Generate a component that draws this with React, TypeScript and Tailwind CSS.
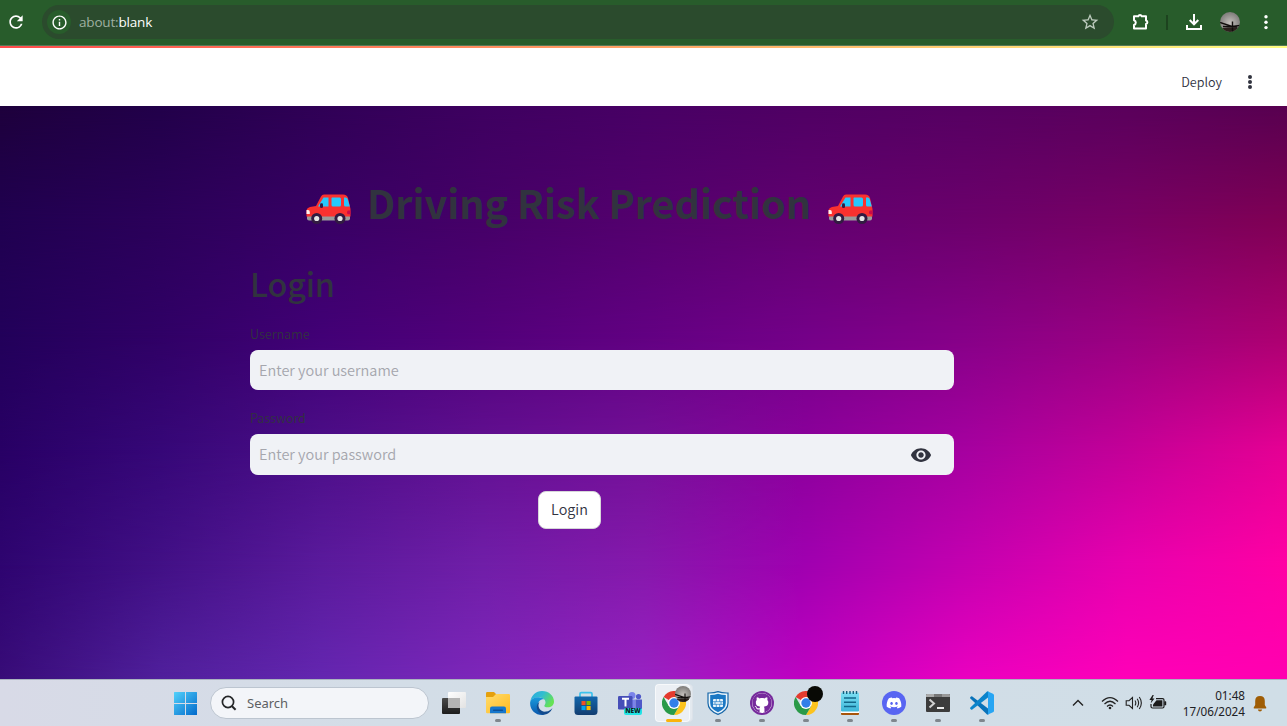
import React from "react";
import { MdRefresh, MdInfoOutline, MdStarBorder, MdVisibility } from "react-icons/md";
import { FaDiscord, FaGithub } from "react-icons/fa";

function Backdrop() {
  return (
    <div className="absolute inset-0">
      <div className="absolute inset-0 bg-[linear-gradient(to_right,#1e003c,#22004a,#300056,#3e0060,#480065,#500064,#560062,#5a005c,#580050)]" />
      <div className="absolute inset-0 bg-[linear-gradient(to_right,#200050,#2b005a,#380065,#460068,#54006e,#620070,#6c006c,#780064,#800054)] [mask-image:linear-gradient(to_bottom,transparent_0%,black_20%)]" />
      <div className="absolute inset-0 bg-[linear-gradient(to_right,#22005a,#300066,#420076,#52007a,#620082,#740088,#860088,#9a0080,#ac0070)] [mask-image:linear-gradient(to_bottom,transparent_20%,black_40%)]" />
      <div className="absolute inset-0 bg-[linear-gradient(to_right,#280065,#360778,#4c0e88,#621092,#741098,#8c009c,#a600a0,#c40098,#e60094)] [mask-image:linear-gradient(to_bottom,transparent_40%,black_60%)]" />
      <div className="absolute inset-0 bg-[linear-gradient(to_right,#2e0470,#421086,#5a1a9c,#701ea8,#8618ac,#a000b0,#c400b0,#e800ae,#ff00a4)] [mask-image:linear-gradient(to_bottom,transparent_60%,black_80%)]" />
      <div className="absolute inset-0 bg-[linear-gradient(to_right,#380c78,#50209c,#6426b0,#7e26ba,#9822c2,#c000c2,#ea00c0,#ff00b8,#ff00b0)] [mask-image:linear-gradient(to_bottom,transparent_80%,black_100%)]" />
    </div>
  );
}

function Avatar({ size }: { size: number }) {
  return (
    <svg width={size} height={size} viewBox="0 0 20 20">
      <defs>
        <radialGradient id="sky" cx=".5" cy=".55" r=".6">
          <stop offset="0" stopColor="#c4c0bc" />
          <stop offset="1" stopColor="#777573" />
        </radialGradient>
        <clipPath id="disc"><circle cx="10" cy="10" r="10" /></clipPath>
      </defs>
      <g clipPath="url(#disc)">
        <rect width="20" height="20" fill="url(#sky)" />
        <path d="M0 16.500 L8 15.500 L20 15.500 V20 H0Z" fill="#2c211d" />
        <path d="M0 10.500 L12 14.500 L20 13.500 M12.500 9.500 V20 M3 14.500 L17 15" stroke="#120e0d" strokeWidth="1.400" fill="none" />
      </g>
    </svg>
  );
}

function BrowserBar() {
  return (
    <div className="flex h-[45px] shrink-0 items-start bg-[#285c2b] pt-[5px] text-white">
      <div className="flex h-[34px] w-[42px] items-center pl-[6px]"><MdRefresh size={20} /></div>
      <div className="flex h-[34px] w-[1072px] items-center rounded-full bg-[#2b4b2d] pl-[5px] pr-[14px]">
        <div className="flex size-6 items-center justify-center rounded-full bg-[#285c2b]"><MdInfoOutline size={17} /></div>
        <span className="ml-2 grow font-['Open_Sans',sans-serif] text-[13.5px] font-normal leading-5 tracking-[-0.18px] text-white"><span className="text-[#9fb0a0]">about:</span>blank</span>
        <MdStarBorder size={20} className="text-[#bccabd]" />
      </div>
      <div className="flex h-[34px] grow items-center">
        <svg className="ml-4" width="20" height="20" viewBox="0 0 20 20" fill="none" stroke="#fff" strokeWidth="2" strokeLinejoin="round">
          <path d="M4 4.300H8.300A1.800 1.800 0 0 1 11.700 4.300H16V8.500A1.800 1.800 0 0 1 16 12V16.500H4V13A2.500 2.500 0 0 0 4 8.200Z" />
        </svg>
        <div className="ml-4 h-[15px] w-[2px] bg-[#1d431f]" />
        <svg className="ml-4" width="20" height="20" viewBox="0 0 20 20" fill="none" stroke="#fff" strokeWidth="2">
          <path d="M10 2V12M5.700 8L10 12.300L14.300 8M3 13V17H17V13" />
        </svg>
        <div className="ml-4"><Avatar size={20} /></div>
        <svg className="ml-[21px]" width="10" height="20" viewBox="0 0 10 20" fill="#fff">
          <circle cx="5" cy="4.800" r="1.700" /><circle cx="5" cy="10.200" r="1.700" /><circle cx="5" cy="15.600" r="1.700" />
        </svg>
      </div>
    </div>
  );
}

function Car() {
  return (
    <svg width="45" height="30" viewBox="0 0 45 30">
      <rect x="1" y="21" width="43" height="5.500" rx="2" fill="#9b9b9b" />
      <path d="M18 0.500H37Q41 .5 42 4L44.500 15V22.500H.5V17Q.5 14 4 13L10 12L15 2.500Q16 .5 18 .5Z" fill="#f9312f" />
      <path d="M17.500 3.500H22.500V12.500H12Z" fill="#26c9fc" />
      <path d="M26 3.500H33.500Q35 3.500 35 5V11Q35 12.500 33.500 12.500H27Q25.500 12.500 25.500 11V4Z" fill="#26c9fc" />
      <path d="M38 3.500H40Q41.500 3.500 42 6L43.800 12.500H39.500Q38 12.500 38 11Z" fill="#26c9fc" />
      <rect x="14" y="9.200" width="3" height="4.800" rx="1.300" fill="#321b41" />
      <path d="M.5 16H2Q3.800 16 3.800 18V20H.5Z" fill="#fff0ee" />
      <path d="M44.500 16.500H42Q41 17 41 18.500Q41 20 42 20.200H44.500Z" fill="#ca0b4a" />
      <circle cx="10.700" cy="24.500" r="5.500" fill="#321b41" />
      <circle cx="34" cy="24.500" r="5.500" fill="#321b41" />
      <circle cx="10.700" cy="24.500" r="2.600" fill="#e6e6e6" />
      <circle cx="34" cy="24.500" r="2.600" fill="#e6e6e6" />
    </svg>
  );
}

function Windows() {
  return (
    <svg width="24" height="24" viewBox="0 0 24 24">
      <defs><linearGradient id="win" x1="0" y1="0" x2="24" y2="24" gradientUnits="userSpaceOnUse"><stop stopColor="#56d6fd" /><stop offset="1" stopColor="#0169cb" /></linearGradient></defs>
      <path fill="url(#win)" d="M1 1.500Q1 1 1.500 1H12V12H1ZM13 1H23.500Q24 1 24 1.500V12H13ZM1 13H12V24H1.500Q1 24 1 23.500ZM13 13H24V23.500Q24 24 23.500 24H13Z" />
    </svg>
  );
}

function TaskView() {
  return (
    <svg width="24" height="24" viewBox="0 0 24 24">
      <defs>
        <linearGradient id="tvd" x1="0" y1="0" x2="0" y2="1"><stop stopColor="#4a4a4a" /><stop offset="1" stopColor="#1c1c1c" /></linearGradient>
        <linearGradient id="tvl" x1="0" y1="0" x2="1" y2="1"><stop stopColor="#fff" /><stop offset="1" stopColor="#e2e2e2" /></linearGradient>
      </defs>
      <rect x="6" y="1" width="18" height="16" rx="1" fill="url(#tvl)" />
      <rect x="0" y="7" width="18" height="16" rx="1" fill="url(#tvd)" />
      <path d="M6 7H18V17H6Z" fill="#b4b4b4" />
    </svg>
  );
}

function Explorer() {
  return (
    <svg width="24" height="24" viewBox="0 0 24 24">
      <defs><linearGradient id="fol" x1="0" y1="0" x2="1" y2="1"><stop stopColor="#ffdc6d" /><stop offset="1" stopColor="#ffba20" /></linearGradient></defs>
      <path d="M0 2.200Q0 1 1.200 1H8L10.500 3.500V8H0Z" fill="#e5a00d" />
      <path d="M0 6H7L10 3H22.800Q24 3 24 4.200V21Q24 22.200 22.800 22.200H1.200Q0 22.200 0 21Z" fill="url(#fol)" />
      <path d="M4 22.200V17.500Q4 15.500 6 15.500H18Q20 15.500 20 17.500V22.200Z" fill="#1677cd" />
      <rect x="7" y="18.600" width="10" height="1.300" rx=".6" fill="#0c5098" />
    </svg>
  );
}

function Edge() {
  return (
    <svg width="24" height="24" viewBox="0 0 24 24">
      <defs>
        <linearGradient id="e1" x1="0" y1="0" x2="1" y2=".5"><stop stopColor="#27a8e0" /><stop offset=".5" stopColor="#32bdd0" /><stop offset="1" stopColor="#66e254" /></linearGradient>
        <linearGradient id="e2" x1="0" y1="0" x2="0" y2="1"><stop stopColor="#189bdc" /><stop offset="1" stopColor="#0a57ad" /></linearGradient>
      </defs>
      <path d="M.3 11C1 4.500 6 0 12 0C19 0 24 5 24 10.500C24 14.500 21 16.300 17.800 16.300C15 16.300 14 15.200 14.400 14.400C15 13.500 15.500 12.800 15.500 11.500C15.500 8.400 12.500 6.300 8.800 6.300C4 6.300 1 8.500.3 11Z" fill="url(#e1)" />
      <path d="M.2 11C1 8 4.500 6.200 8.800 6.300C11 6.300 13 7.200 14.200 8.400C10.500 8 8 10.500 8 14.200C8 18.500 11.300 23.400 15 23.500C13.800 24 13 24 12 24C5 24-.7 18 .2 11Z" fill="url(#e2)" />
      <path d="M9.500 10.800C6.500 16 10.500 21.300 16 20.600C19 20.300 21 18.800 22.500 17C20.500 22 16.500 24 12.500 23.600C7 22 4.500 14 9.500 10.800Z" fill="#124a8d" />
    </svg>
  );
}

function Store() {
  return (
    <svg width="24" height="24" viewBox="0 0 24 24">
      <defs><linearGradient id="sto" x1="0" y1="0" x2="0" y2="1"><stop stopColor="#1267ad" /><stop offset="1" stopColor="#123d70" /></linearGradient></defs>
      <path d="M6 6V2.800Q6 1.600 7.200 1.600H16.800Q18 1.600 18 2.800V6" fill="none" stroke="#3cc2ed" strokeWidth="1.700" />
      <path d="M.5 6.500Q.5 5.500 1.500 5.500H22.500Q23.500 5.500 23.500 6.500V20.500Q23.500 24 20 24H4Q.5 24 .5 20.500Z" fill="url(#sto)" />
      <path d="M7.500 10H11.600V14.100H7.500Z" fill="#f25022" /><path d="M12.500 10H16.600V14.100H12.500Z" fill="#7fba00" />
      <path d="M7.500 15H11.600V19.100H7.500Z" fill="#00a4ef" /><path d="M12.500 15H16.600V19.100H12.500Z" fill="#ffb900" />
    </svg>
  );
}

function Teams() {
  return (
    <div className="relative size-6">
      <svg width="24" height="24" viewBox="0 0 24 24">
        <circle cx="14" cy="4.500" r="3.500" fill="#7b83eb" /><circle cx="20.500" cy="5.600" r="2.600" fill="#5059c9" />
        <path d="M9 8.500H17.500V23H9Z" fill="#7b83eb" /><path d="M17.500 8.500H24V18H17.500Z" fill="#5059c9" />
        <rect y="5" width="14.500" height="13.500" rx="1.200" fill="#464eb8" />
        <path d="M4 7.700H11M7.500 7.700V15.500" stroke="#fff" strokeWidth="2" />
      </svg>
      <span className="absolute left-[6px] top-[17px] flex h-[7px] w-[18px] items-center justify-center rounded-[2px] bg-[#22e3e5] font-['Open_Sans',sans-serif] text-[6.5px] font-extrabold leading-none text-[#102526]">NEW</span>
    </div>
  );
}

function Chrome() {
  return (
    <svg width="24" height="24" viewBox="0 0 24 24">
      <path d="M12 12L1.600 6A12 12 0 0 1 22.400 6Z" fill="#e33b2e" />
      <path d="M12 6H22.400A12 12 0 0 1 12 24L17.200 15Z" fill="#fcc31e" />
      <path d="M1.600 6A12 12 0 0 0 12 24L17.200 15L12 12L6.800 15Z" fill="#2a9a48" />
      <path d="M12 6H22.400L17 10Z" fill="#fcc31e" />
      <circle cx="12" cy="12" r="6" fill="#fff" /><circle cx="12" cy="12" r="4.700" fill="#317fe8" />
    </svg>
  );
}

function ChromeProfile({ dark }: { dark?: boolean }) {
  return (
    <div className="relative size-6">
      <Chrome />
      <div className="absolute -top-[5px] left-[13px]">
        {dark ? <div className="size-4 rounded-full bg-[#080905]" /> : <Avatar size={16} />}
      </div>
    </div>
  );
}

function Shield() {
  return (
    <svg width="24" height="24" viewBox="0 0 24 24">
      <path d="M2 2Q8 2.200 12 .6Q16 2.200 22 2V12Q22 19.500 12 23.400Q2 19.500 2 12Z" fill="#eaf5fc" stroke="#1766a8" strokeWidth="1.200" />
      <path d="M4.200 4Q8.500 4 12 2.700Q15.500 4 19.800 4V12Q19.800 18 12 21.300Q4.200 18 4.200 12Z" fill="#1b78c4" />
      <rect x="7" y="8" width="10" height="8" rx="1" fill="#eaf5fc" />
      <path d="M7 10.700H17M7 13.300H17M10.300 8V10.700M13.700 8V10.700M9 10.700V13.300M15 10.700V13.300M10.300 13.300V16M13.700 13.300V16" stroke="#1b78c4" strokeWidth=".7" />
    </svg>
  );
}

function Github() {
  return (
    <div className="flex size-6 items-center justify-center rounded-full bg-[#762a9c]">
      <div className="rounded-full bg-white"><FaGithub size={20} className="text-[#762a9c]" /></div>
    </div>
  );
}

function Notepad() {
  return (
    <svg width="24" height="24" viewBox="0 0 24 24">
      <defs><linearGradient id="note" x1="0" y1="0" x2="0" y2="1"><stop stopColor="#7ce0f4" /><stop offset="1" stopColor="#3cb6d8" /></linearGradient></defs>
      <path d="M3 20H21V23Q21 24 20 24H4Q3 24 3 23Z" fill="#a8550c" /><path d="M3 20H21V22H3Z" fill="#fff" />
      <rect x="3" y="1.500" width="18" height="19" rx="1" fill="url(#note)" />
      <path d="M5.500 0V3M8.700 0V3M12 0V3M15.300 0V3M18.500 0V3" stroke="#165f7e" strokeWidth="1.400" />
      <path d="M6 7H18M6 11.200H18M6 15.400H18" stroke="#12688a" strokeWidth="1.500" />
    </svg>
  );
}

function Terminal() {
  return (
    <svg width="24" height="24" viewBox="0 0 24 24">
      <rect y="3" width="24" height="18" rx="1" fill="#3c3c3c" />
      <path d="M0 4Q0 3 1 3H8V6H0Z" fill="#aaa" /><path d="M8 3H16V6H8Z" fill="#777" /><path d="M16 3H23Q24 3 24 4V6H16Z" fill="#999" />
      <path d="M3.500 8.500L8 12.500L3.500 16.500" fill="none" stroke="#d0d0d0" strokeWidth="2" /><path d="M11 17H18" stroke="#fff" strokeWidth="1.800" />
    </svg>
  );
}

function VsCode() {
  return (
    <svg width="24" height="24" viewBox="0 0 24 24">
      <path d="M18 17.500L2.300 5.400Q1.600 5 1 5.500L.3 6.200Q-.2 6.900.4 7.500L17.300 23.800L19 23Z" fill="#0872b9" />
      <path d="M18 6.500L2.300 18.600Q1.600 19 1 18.500L.3 17.800Q-.2 17.100.4 16.500L17.300.2L19 1Z" fill="#0b84cb" />
      <path d="M17.300.2L23 2.700Q24 3.200 24 4.200V19.800Q24 20.800 23 21.300L17.300 23.800Q18 23.500 18 22.500V1.500Q18 .5 17.300.2Z" fill="#27a5f3" />
    </svg>
  );
}

const apps: { name: string; icon: React.ReactNode; running?: boolean }[] = [
  { name: "views", icon: <TaskView /> },
  { name: "files", icon: <Explorer />, running: true },
  { name: "edge", icon: <Edge /> },
  { name: "store", icon: <Store /> },
  { name: "teams", icon: <Teams /> },
  { name: "chrome", icon: <ChromeProfile /> },
  { name: "shield", icon: <Shield />, running: true },
  { name: "github", icon: <Github />, running: true },
  { name: "chrome2", icon: <ChromeProfile dark />, running: true },
  { name: "notepad", icon: <Notepad />, running: true },
  { name: "discord", icon: <div className="flex size-6 items-center justify-center rounded-full bg-[#5865f2]"><FaDiscord size={16} className="text-white" /></div>, running: true },
  { name: "terminal", icon: <Terminal />, running: true },
  { name: "code", icon: <VsCode />, running: true },
];

function Taskbar() {
  return (
    <div className="flex h-[47px] shrink-0 border-t border-[#a9b3bf] bg-[linear-gradient(to_right,#d8dae7,#d3dde7_30%,#d0dee7)] pl-[163px] font-['Noto_Sans',sans-serif] font-normal">
      <div className="flex w-[44px] justify-center pt-[11px]"><Windows /></div>
      <div className="ml-[3px] mr-[3px] mt-[7px] flex h-[32px] w-[219px] items-center rounded-full border border-[#bcc5d0] bg-[#f3f5f9] pl-[10px]">
        <svg width="16" height="16" viewBox="0 0 16 16" fill="none" stroke="#242628" strokeWidth="1.700">
          <circle cx="7" cy="7" r="5.600" /><path d="M11 11.200L14.600 14.800" strokeWidth="2" />
        </svg>
        <span className="ml-[10px] text-[13px] leading-5 text-[#5d5f63]">Search</span>
      </div>
      {apps.map((app) => (
        <div key={app.name} className="relative flex w-[44px] flex-col items-center pt-[11px]">
          {app.name === "chrome" && (
            <>
              <div className="absolute left-[5px] top-1 h-[38px] w-[36px] rounded border border-[#dce2e9] bg-[#e3e9ef]" />
              <div className="absolute left-[3px] top-1 h-[38px] w-[35px] rounded border border-white/60 bg-[#ebeff4]" />
            </>
          )}
          <div className="relative">{app.icon}</div>
          {app.running && <div className="mt-1 h-[3px] w-[6px] rounded-full bg-[#7f868d]" />}
          {app.name === "chrome" && <div className="relative mt-1 h-[3px] w-4 rounded-full bg-[#fab30b]" />}
        </div>
      ))}
      <div className="ml-[68px] flex h-[46px] items-center">
        <svg width="12" height="12" viewBox="0 0 12 12" fill="none" stroke="#222" strokeWidth="1.400"><path d="M1 8.500L6 3.500L11 8.500" /></svg>
        <svg className="ml-[17px]" width="18" height="16" viewBox="0 0 18 16" fill="none" stroke="#222" strokeWidth="1.200">
          <path d="M1 6.500Q9-1.500 17 6.500M3.500 9Q9 3.500 14.500 9M6 11.500Q9 8.500 12 11.500" /><circle cx="9" cy="13" r="1.300" fill="#222" stroke="none" />
        </svg>
        <svg className="ml-[6px]" width="18" height="16" viewBox="0 0 18 16" fill="none" stroke="#222" strokeWidth="1.100">
          <path d="M1.200 5.700H4L7.500 2.500V13.500L4 10.300H1.200ZM10 5.500Q11.600 8 10 10.500M12.200 3.700Q15 8 12.200 12.300M14.300 2Q18.400 8 14.300 14" />
        </svg>
        <svg className="ml-[6px]" width="18" height="16" viewBox="0 0 18 16">
          <path d="M7 3.600H13.500Q15 3.600 15 5V11.500Q15 13 13.500 13H3.500Q2 13 2 11.500V9" fill="none" stroke="#1b1b1b" strokeWidth="1.200" />
          <path d="M4 11.400V9.500L7.500 5.300H13.400V11.400Z" fill="#1b1b1b" /><rect x="15.300" y="6.300" width="1.900" height="4" rx=".6" fill="#1b1b1b" />
          <path d="M3.600 0L.4 5H2.600L1.600 8.500L5.500 3.600H3.400L4.800 0Z" fill="#1b1b1b" />
        </svg>
      </div>
      <div className="ml-auto flex flex-col items-end pt-[7px] text-[11.7px] leading-4 text-[#1d2023]"><span>01:48</span><span>17/06/2024</span></div>
      <svg className="ml-2 mr-5 mt-4" width="14" height="16" viewBox="0 0 14 16" fill="#9f5d05">
        <path d="M7 0Q11.800 0 11.800 5V9L13.300 11.500Q13.600 12.500 12.600 12.500H1.400Q.4 12.500.7 11.500L2.200 9V5Q2.200 0 7 0ZM4.800 13.500H9.200Q8.700 15.500 7 15.500Q5.300 15.500 4.800 13.500Z" />
      </svg>
    </div>
  );
}

export default function App() {
  return (
    <div className="flex h-[726px] w-[1287px] flex-col overflow-hidden bg-white font-['Noto_Sans_CJK_SC',sans-serif] font-[350]">
      <BrowserBar />
      <div className="h-px shrink-0 bg-[#537955]" />
      <div className="h-[2px] shrink-0 bg-[linear-gradient(to_right,#ff4b4b,#fffd80)]" />
      <div className="flex h-[58px] shrink-0 items-center justify-end pr-[32px] pt-[10px] text-[#31333f]">
        <span className="pb-px text-[12.6px] leading-5">Deploy</span>
        <svg className="ml-[23px]" width="10" height="16" viewBox="0 0 10 16" fill="#31333f">
          <circle cx="5" cy="3" r="2" /><circle cx="5" cy="8" r="2" /><circle cx="5" cy="13" r="2" />
        </svg>
      </div>
      <main className="relative h-[573px] shrink-0 text-[#31333f]">
        <Backdrop />
        <div className="relative ml-[250px] w-[704px]">
          <h1 className="flex h-[133px] items-start pl-[55.5px] text-[39.6px] font-bold leading-[52px]">
            <span className="mt-[88px]"><Car /></span>
            <span className="ml-[15px] mt-[70px] w-[447px] whitespace-nowrap pl-[1.5px] tracking-[-0.03px]">Driving Risk Prediction</span>
            <span className="ml-[15px] mt-[88px]"><Car /></span>
          </h1>
          <h2 className="mt-[22px] text-[32.4px] font-medium leading-[44px] tracking-[-0.2px]">Login</h2>
          <label className="mt-[17px] flex h-6 items-center text-[12.6px]">Username</label>
          <input placeholder="Enter your username" className="mt-1 block h-[40px] w-full rounded-lg bg-[#f0f2f6] px-[9px] pb-[2px] text-[14.5px] outline-none placeholder:text-[#a5a6ad]" />
          <label className="mt-[16px] flex h-6 items-center text-[12.6px]">Password</label>
          <div className="mt-1 flex h-[41px] items-center rounded-lg bg-[#f0f2f6] pl-[9px] pr-[22px]">
            <input type="password" placeholder="Enter your password" className="h-full min-w-0 grow bg-transparent pb-[2px] text-[14.5px] outline-none placeholder:text-[#a5a6ad]" />
            <MdVisibility size={22} />
          </div>
          <button className="ml-[288px] mt-4 flex h-[38px] w-[63px] items-center justify-center rounded-lg border border-[#d6d6d9] bg-white pb-[2px] text-[14.4px]">Login</button>
        </div>
      </main>
      <Taskbar />
    </div>
  );
}
